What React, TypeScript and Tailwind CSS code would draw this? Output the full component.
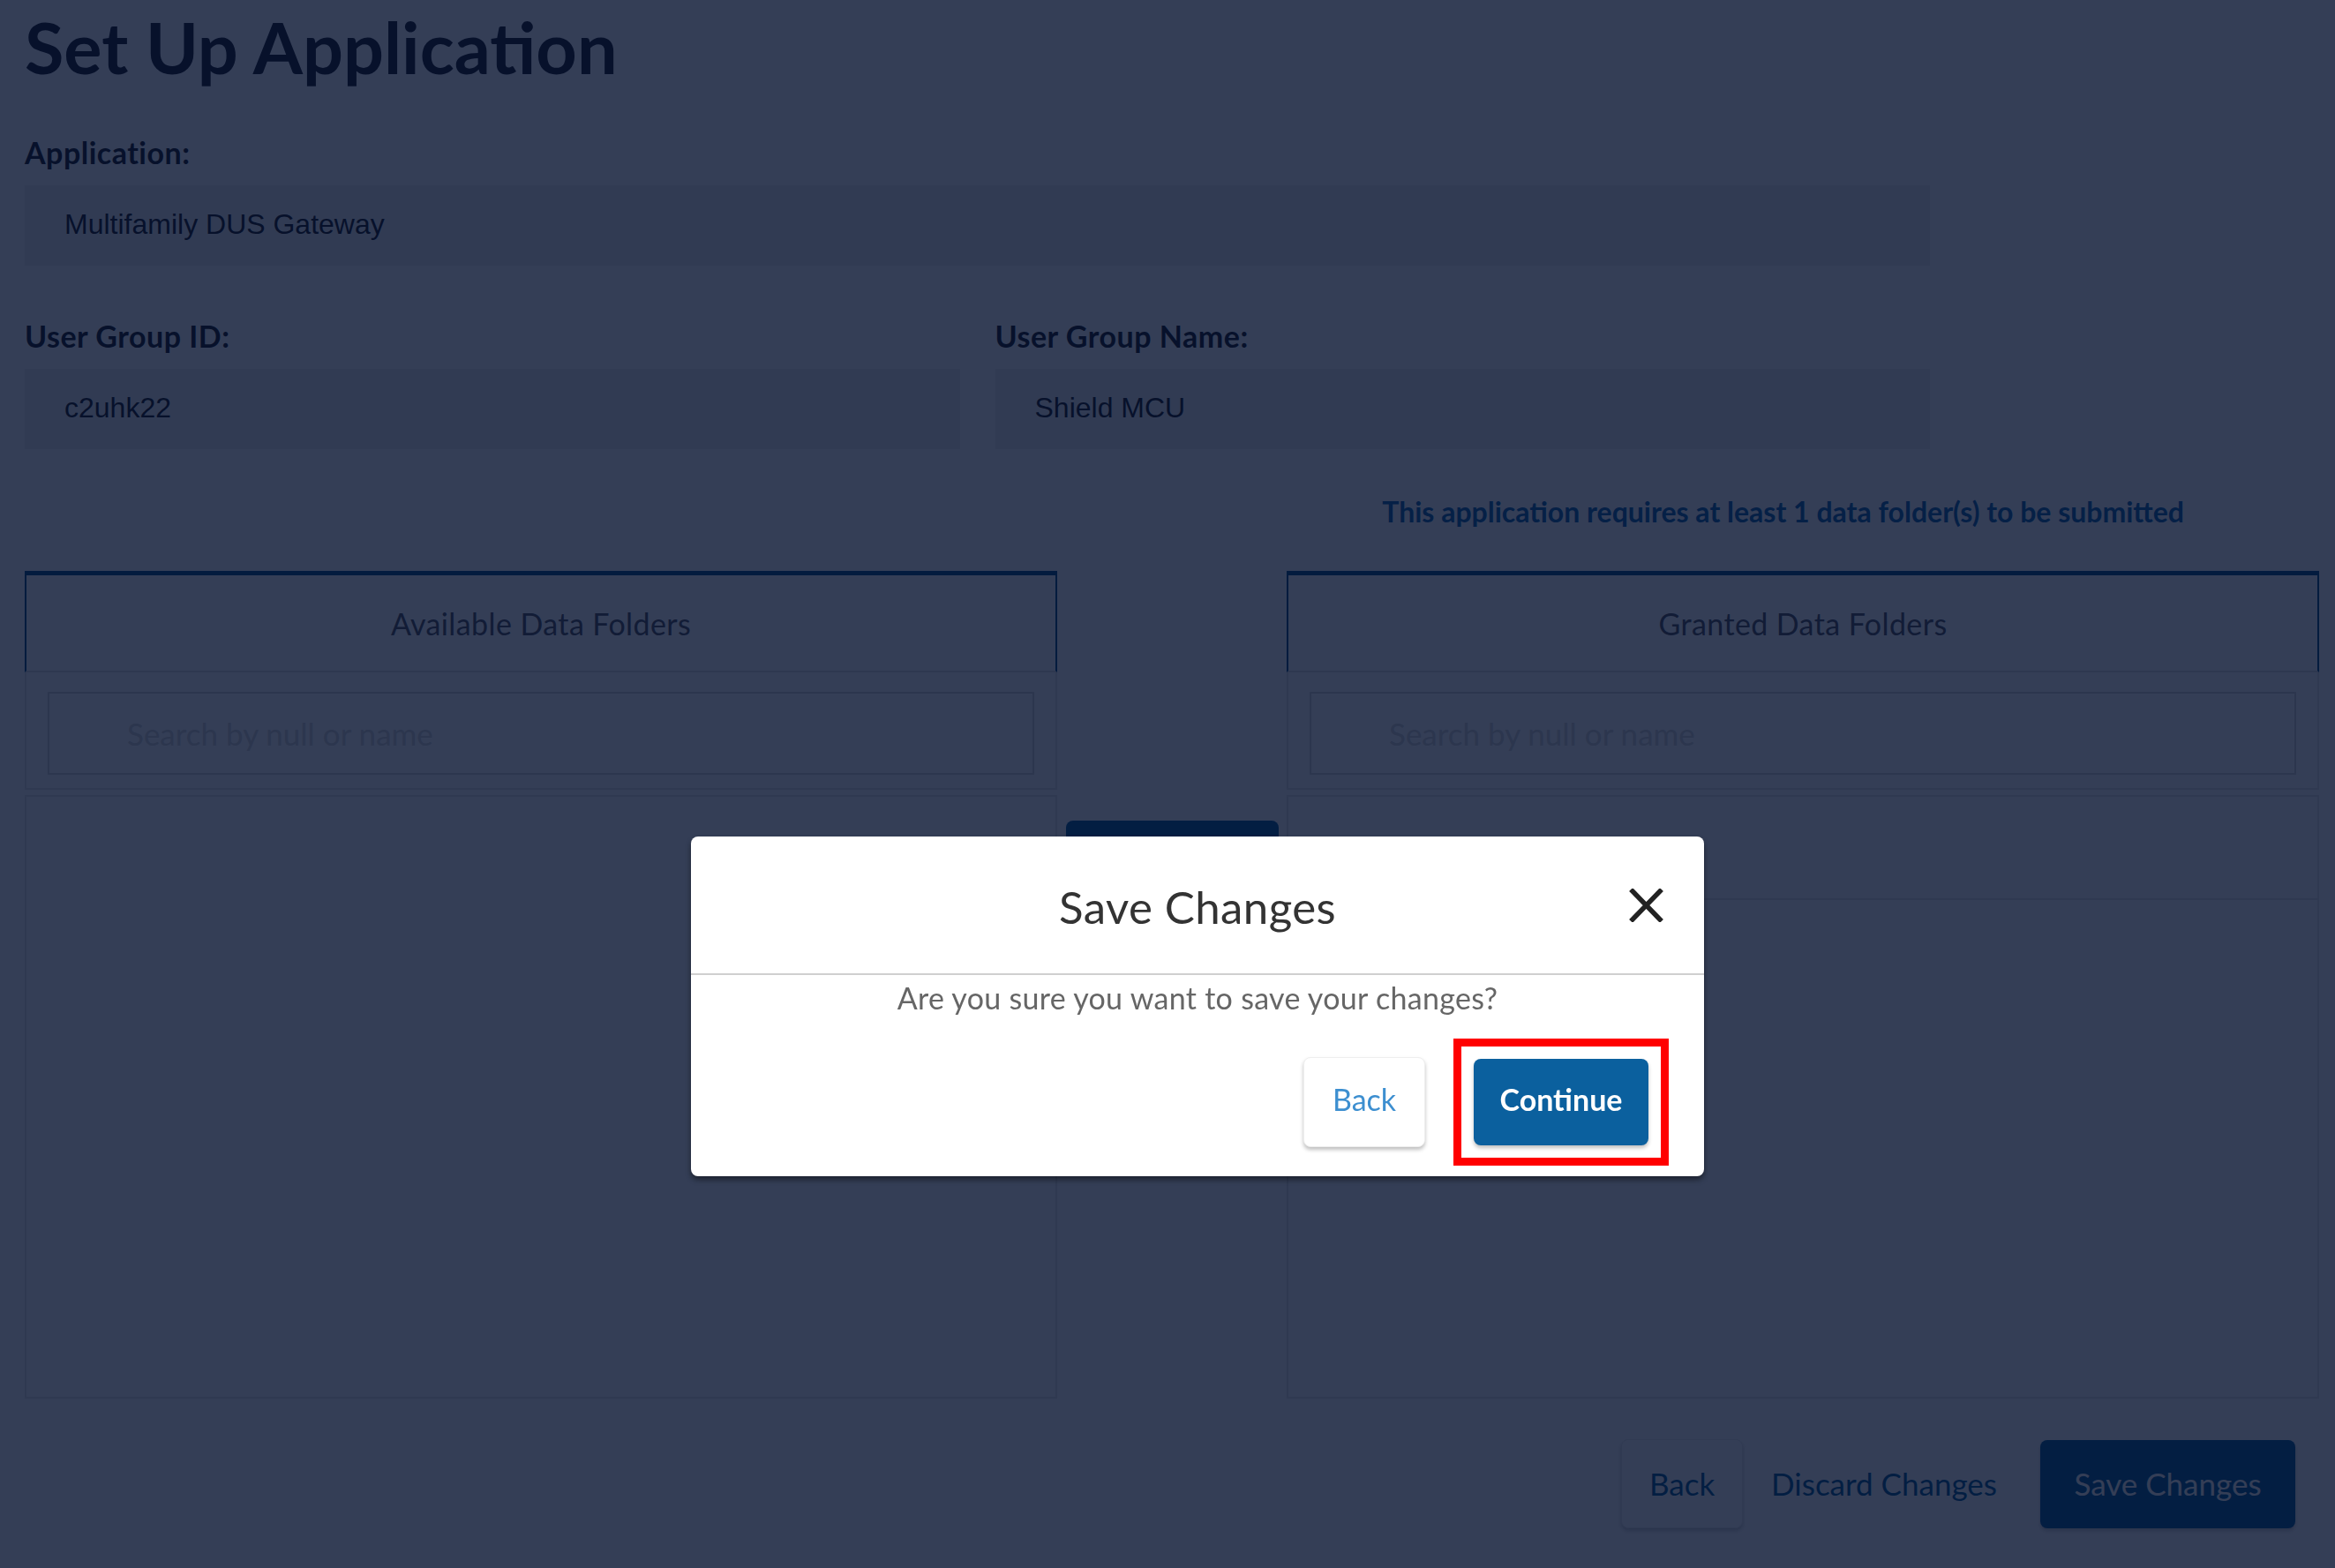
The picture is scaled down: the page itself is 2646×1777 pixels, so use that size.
import React from 'react';
import { ChevronLeft, ChevronRight } from 'lucide-react';

type FieldProps = {
  label: string;
  value: string;
  className?: string;
};

function Field({ label, value, className }: FieldProps) {
  return (
    <div className={className}>
      <label className="block text-[34px] font-bold leading-[38px] tracking-[0.5px] text-[#1e1e28]">{label}</label>
      <div className="mt-[18px] flex h-[91px] items-center bg-[#efefef] pb-[4px] pl-[45px] font-['Liberation_Sans',Arial,sans-serif] text-[32px] leading-[36px] text-[#1e1e28]">
        {value}
      </div>
    </div>
  );
}

function FolderPanel({ title, granted }: { title: string; granted?: boolean }) {
  return (
    <section className="flex flex-col">
      <div className="flex h-[115px] items-center justify-center border-x-2 border-t-[5px] border-b-2 border-x-[#0b4f86] border-t-[#0b4f86] border-b-[#e2e2e2] text-[34px] tracking-[0.4px] text-[#55555f]">
        {title}
      </div>
      <div className="border-x-2 border-b-2 border-[#e4e4e4] px-[24px] pb-[15px] pt-[22px]">
        <input
          type="text"
          placeholder="Search by null or name"
          className="h-[94px] w-full border-2 border-[#d6d6d6] bg-transparent pl-[88px] text-[35px] outline-none placeholder:text-[#d4d4d4]"
        />
      </div>
      <div className="mt-[6px] h-[684px] border-2 border-[#e4e4e4]">
        {granted && <div className="h-[117px] border-b-2 border-[#e4e4e4]" />}
      </div>
    </section>
  );
}

function CloseIcon() {
  return (
    <svg width="39" height="38" viewBox="0 0 39 38" fill="none" aria-hidden="true">
      <path d="M4 3 L35 35 M35 3 L4 35" stroke="#222222" strokeWidth="5.5" strokeLinecap="square" />
    </svg>
  );
}

export default function App() {
  return (
    <div className="relative min-h-[1777px] bg-white font-['Lato','Noto_Sans',sans-serif] text-[#1e1e28]">
      <main className="pl-[28px] pr-[18px]">
        <h1 className="pt-[5px] text-[81px] font-bold leading-[95px] text-[#1e1e28]">Set Up Application</h1>

        <div className="w-[2159px]">
          <Field className="mt-[54px]" label="Application:" value="Multifamily DUS Gateway" />
          <div className="mt-[61px] grid grid-cols-2 gap-x-[40px]">
            <Field label="User Group ID:" value="c2uhk22" />
            <Field label="User Group Name:" value="Shield MCU" />
          </div>
        </div>

        <p className="mt-[53px] pr-[153px] text-right text-[32px] font-bold leading-[36px] text-[#1668b0]">
          This application requires at least 1 data folder(s) to be submitted
        </p>

        <div className="mt-[49px] grid grid-cols-[1170px_260px_1170px]">
          <FolderPanel title="Available Data Folders" />
          <div className="flex flex-col items-center gap-[28px] pt-[283px]">
            <button
              type="button"
              aria-label="Grant selected folders"
              className="flex h-[100px] w-[241px] items-center justify-center rounded-[8px] bg-[#0b5f9c] text-white"
            >
              <ChevronRight className="h-[40px] w-[40px]" strokeWidth={3} />
            </button>
            <button
              type="button"
              aria-label="Remove selected folders"
              className="flex h-[100px] w-[241px] items-center justify-center rounded-[8px] bg-[#0b5f9c] text-white"
            >
              <ChevronLeft className="h-[40px] w-[40px]" strokeWidth={3} />
            </button>
          </div>
          <FolderPanel title="Granted Data Folders" granted />
        </div>

        <div className="mt-[46px] flex items-center justify-end pr-[27px]">
          <button
            type="button"
            className="h-[101px] w-[138px] rounded-[8px] border border-[#ececec] bg-white text-[35px] text-[#0b5f9c] shadow-[0_3px_4px_rgba(0,0,0,0.2)]"
          >
            Back
          </button>
          <button type="button" className="ml-[12px] px-[20px] text-[35px] text-[#0b5f9c]">
            Discard Changes
          </button>
          <button
            type="button"
            className="ml-[29px] h-[100px] w-[289px] rounded-[8px] bg-[#0b5f9c] text-[35px] text-white shadow-[0_3px_4px_rgba(0,0,0,0.2)]"
          >
            Save Changes
          </button>
        </div>
      </main>

      <div className="fixed inset-0 bg-[#010e2c]/80">
        <div className="flex justify-center pl-[68px] pt-[948px]">
          <div role="dialog" className="w-[1148px] rounded-[8px] bg-white shadow-[0_4px_6px_rgba(0,0,0,0.45)]">
            <div className="grid h-[155px] grid-cols-[1fr_auto_1fr] items-start">
              <div />
              <h2 className="mt-[50px] text-[51px] leading-[60px] tracking-[0.4px] text-[#333333]">Save Changes</h2>
              <div className="flex justify-end pr-[46px] pt-[59px]">
                <button type="button" aria-label="Close">
                  <CloseIcon />
                </button>
              </div>
            </div>
            <div className="border-t-2 border-[#cfcfcf]" />
            <p className="pt-[7px] text-center text-[34px] leading-[38px] tracking-[0.3px] text-[#666666]">
              Are you sure you want to save your changes?
            </p>
            <div className="flex items-center justify-end pb-[33px] pr-[63px] pt-[48px]">
              <button
                type="button"
                className="h-[102px] w-[138px] rounded-[8px] border border-[#eeeeee] bg-white pb-[8px] text-[34px] text-[#3d8fd0] shadow-[0_3px_4px_rgba(0,0,0,0.25)]"
              >
                Back
              </button>
              <div className="relative ml-[55px]">
                <button
                  type="button"
                  className="h-[98px] w-[198px] rounded-[8px] bg-[#0b609e] pb-[8px] text-[34px] font-bold text-white shadow-[0_3px_4px_rgba(0,0,0,0.25)]"
                >
                  Continue
                </button>
                <span className="pointer-events-none absolute -inset-[23px] border-[9px] border-[#ff0000]" />
              </div>
            </div>
          </div>
        </div>
      </div>
    </div>
  );
}
